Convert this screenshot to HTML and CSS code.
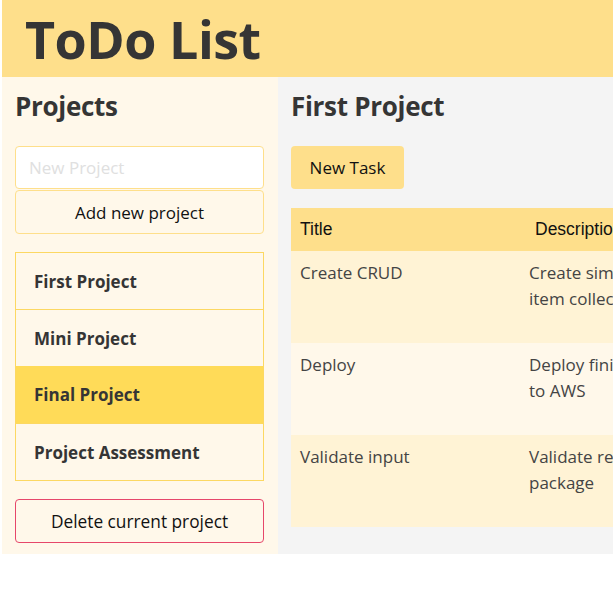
FILE: index.html
```html
<!DOCTYPE html>
<html>
<head>
<meta charset="utf-8">
<link rel="stylesheet" href="styles.css">
</head>
<body>
<div class="app">
  <header class="topbar"><h1>ToDo List</h1></header>
  <div class="layout">
    <aside class="sidebar">
      <h2>Projects</h2>
      <input class="new-input" type="text" placeholder="New Project">
      <button class="add-btn">Add new project</button>
      <ul class="projects">
        <li>First Project</li>
        <li>Mini Project</li>
        <li class="active">Final Project</li>
        <li>Project Assessment</li>
      </ul>
      <button class="del-btn">Delete current project</button>
    </aside>
    <main class="main">
      <h2>First Project</h2>
      <button class="task-btn">New Task</button>
      <table class="tasks">
        <thead>
          <tr><th class="c-title">Title</th><th class="c-desc">Description</th></tr>
        </thead>
        <tbody>
          <tr class="odd"><td>Create CRUD</td><td>Create simple<br>item collection</td></tr>
          <tr class="even"><td>Deploy</td><td>Deploy finished<br>to AWS</td></tr>
          <tr class="odd"><td>Validate input</td><td>Validate request<br>package</td></tr>
        </tbody>
      </table>
    </main>
  </div>
</div>
</body>
</html>
```
FILE: styles.css
```css
html, body { margin: 0; padding: 0; background: #fff; }
body { font-family: "Open Sans", "Noto Sans", sans-serif; color: #3a3a3a; overflow: hidden; }
.app { margin-left: 2px; width: 700px; }
.topbar { background: #fedf8b; height: 77px; display: flex; align-items: center; }
.topbar h1 { margin: 0 0 0 23px; font-size: 52px; font-weight: 700; letter-spacing: -0.5px; color: #353535; line-height: 1; }
.layout { display: flex; height: 477px; }
.sidebar { width: 250px; background: #fff8ea; padding: 0 14px 0 13px; display: flex; flex-direction: column; }
.sidebar h2, .main h2 { margin: 14px 0 0; font-size: 26px; font-weight: 700; color: #353535; line-height: 30px; letter-spacing: -0.3px; }
.new-input { margin-top: 25px; height: 43px; box-sizing: border-box; width: 249px; border: 1px solid #fedf8b; border-radius: 4px; background: #fff; padding: 0 13px; font-family: inherit; font-size: 17px; color: #333; outline: none; }
.new-input::placeholder { color: #e0e0e0; }
.add-btn { margin-top: 1px; height: 44px; width: 249px; box-sizing: border-box; border: 1px solid #fedf8b; border-radius: 4px; background: #fff8ea; font-family: inherit; font-size: 17px; color: #111; padding: 0; }
.projects { list-style: none; margin: 18px 0 0; padding: 0; width: 249px; box-sizing: border-box; border: 1px solid #fcd862; }
.projects li { height: 57px; box-sizing: border-box; border-top: 1px solid #fcd862; display: flex; align-items: center; padding-left: 18px; font-weight: 700; font-size: 17px; color: #353535; }
.projects li:first-child { border-top: none; height: 56px; }
.projects li.active { background: #ffdb58; border-top: none; }
.del-btn { margin-top: 18px; height: 44px; width: 249px; box-sizing: border-box; border: 1px solid #e6476a; border-radius: 4px; background: #fff8ea; font-family: inherit; font-size: 17.3px; color: #111; padding: 0; }
.main { flex: 1; background: #f4f4f4; padding: 0 13px; }
.task-btn { margin-top: 25px; display: block; height: 43px; width: 113px; border: none; border-radius: 4px; background: #fedf8b; font-family: inherit; font-size: 17px; color: #111; padding: 0; }
.tasks { margin-top: 19px; border-collapse: collapse; width: 420px; }
.tasks th { background: #fedf8b; height: 43px; text-align: left; font-family: "Liberation Sans", Arial, sans-serif; font-weight: 400; font-size: 17.5px; color: #111; padding: 0 9px; }
.tasks th.c-title { width: 211px; }
.tasks th.c-desc { padding-left: 15px; }
.tasks td { vertical-align: top; padding: 9px 9px 0; height: 83px; font-size: 17px; line-height: 26px; color: #444; white-space: nowrap; }
.tasks tr.odd td { background: #fff3d5; }
.tasks tr.even td { background: #fff8ea; }
```
